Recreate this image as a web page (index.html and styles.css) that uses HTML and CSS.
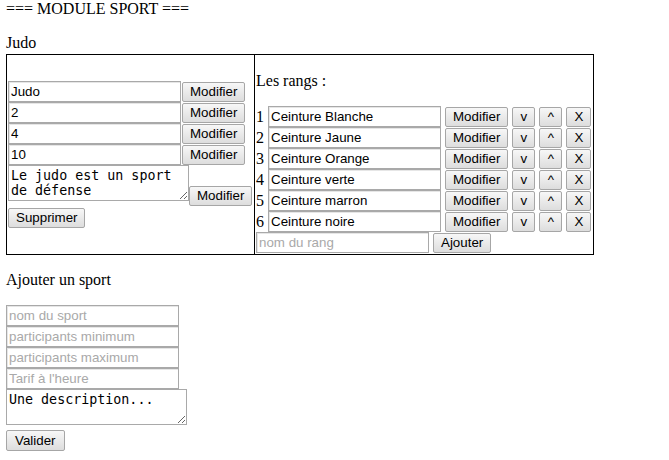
FILE: index.html
```html
<!DOCTYPE html>
<html lang="fr">
<head>
<meta charset="utf-8">
<title>Module sport</title>
<link rel="stylesheet" href="styles.css">
</head>
<body>
<p class="title">=== MODULE SPORT ===</p>
<p class="sport-name">Judo</p>
<div class="sport-table">
  <div class="cell cell-info">
    <div class="field"><input class="inp" type="text" value="Judo"><button class="btn">Modifier</button></div>
    <div class="field"><input class="inp" type="text" value="2"><button class="btn">Modifier</button></div>
    <div class="field"><input class="inp" type="text" value="4"><button class="btn">Modifier</button></div>
    <div class="field"><input class="inp" type="text" value="10"><button class="btn">Modifier</button></div>
    <div class="field field-desc"><textarea class="area">Le judo est un sport de défense</textarea><button class="btn">Modifier</button></div>
    <div class="field"><button class="btn">Supprimer</button></div>
  </div>
  <div class="cell cell-ranks">
    <p class="ranks-title">Les rangs :</p>
    <div class="rank"><span class="num">1</span><input class="inp" type="text" value="Ceinture Blanche"><button class="btn">Modifier</button><button class="btn btn-sm">v</button><button class="btn btn-sm">^</button><button class="btn btn-sm">X</button></div>
    <div class="rank"><span class="num">2</span><input class="inp" type="text" value="Ceinture Jaune"><button class="btn">Modifier</button><button class="btn btn-sm">v</button><button class="btn btn-sm">^</button><button class="btn btn-sm">X</button></div>
    <div class="rank"><span class="num">3</span><input class="inp" type="text" value="Ceinture Orange"><button class="btn">Modifier</button><button class="btn btn-sm">v</button><button class="btn btn-sm">^</button><button class="btn btn-sm">X</button></div>
    <div class="rank"><span class="num">4</span><input class="inp" type="text" value="Ceinture verte"><button class="btn">Modifier</button><button class="btn btn-sm">v</button><button class="btn btn-sm">^</button><button class="btn btn-sm">X</button></div>
    <div class="rank"><span class="num">5</span><input class="inp" type="text" value="Ceinture marron"><button class="btn">Modifier</button><button class="btn btn-sm">v</button><button class="btn btn-sm">^</button><button class="btn btn-sm">X</button></div>
    <div class="rank"><span class="num">6</span><input class="inp" type="text" value="Ceinture noire"><button class="btn">Modifier</button><button class="btn btn-sm">v</button><button class="btn btn-sm">^</button><button class="btn btn-sm">X</button></div>
    <div class="rank rank-add"><input class="inp" type="text" placeholder="nom du rang"><button class="btn">Ajouter</button></div>
  </div>
</div>
<p class="add-title">Ajouter un sport</p>
<form class="add-form">
  <input class="inp" type="text" placeholder="nom du sport">
  <input class="inp" type="text" placeholder="participants minimum">
  <input class="inp" type="text" placeholder="participants maximum">
  <input class="inp" type="text" placeholder="Tarif à l'heure">
  <textarea class="area">Une description...</textarea>
  <div class="submit-row"><button class="btn" type="button">Valider</button></div>
</form>
</body>
</html>
```
FILE: styles.css
```css
html, body {
  background: #ffffff;
}
body {
  margin: 0 6px;
  font-family: "Liberation Serif", "Times New Roman", serif;
  font-size: 16px;
  line-height: 18px;
  color: #000000;
}
p {
  margin: 0;
}
.title {
  margin-bottom: 16px;
}
.sport-name {
  margin-bottom: 2px;
}
.sport-table {
  display: grid;
  grid-template-columns: 248px 338px;
  width: 588px;
  box-sizing: border-box;
  border: 1px solid #000000;
}
.cell {
  padding: 1px;
}
.cell-info {
  border-right: 1px solid #000000;
  display: flex;
  flex-direction: column;
  justify-content: center;
}
.field {
  display: flex;
  align-items: center;
  height: 21px;
  gap: 1px;
}
.field-desc {
  height: 42px;
  align-items: flex-start;
  gap: 0;
}
.field-desc .btn {
  margin-top: 21px;
}
.inp {
  box-sizing: border-box;
  width: 173px;
  height: 21px;
  margin: 0;
  padding: 1px 2px;
  border: 1px solid #a9a9a9;
  box-shadow: inset 1px 1px 0 #e6e6e6;
  font-family: "Liberation Sans", Arial, sans-serif;
  font-size: 13.333px;
  color: #000000;
  background: #ffffff;
  outline: none;
}
.inp::placeholder {
  color: #a9a9a9;
  opacity: 1;
}
.area {
  box-sizing: border-box;
  width: 181px;
  height: 36px;
  margin: 0;
  padding: 2px;
  border: 1px solid #a9a9a9;
  font-family: "DejaVu Sans Mono", "Liberation Mono", monospace;
  font-size: 13.333px;
  line-height: 15px;
  color: #000000;
  background: #ffffff;
  overflow: hidden;
  resize: both;
  outline: none;
}
.btn {
  box-sizing: border-box;
  height: 20px;
  margin: 0;
  padding: 0 7px;
  border: 1px solid #a6a6a6;
  border-radius: 2px;
  background: linear-gradient(#f7f7f7, #dddddd);
  font-family: "Liberation Sans", Arial, sans-serif;
  font-size: 13.333px;
  line-height: 16px;
  color: #000000;
  cursor: pointer;
}
.btn-sm {
  min-width: 23px;
  padding: 0 7px;
}
.ranks-title {
  margin: 16px 0;
}
.rank {
  display: flex;
  align-items: center;
  gap: 4px;
  height: 21px;
}
.num {
  width: 8px;
}
.add-title {
  margin: 16px 0;
}
.add-form {
  display: flex;
  flex-direction: column;
  align-items: flex-start;
}
.submit-row {
  margin-top: 5px;
}
.submit-row .btn {
  height: 21px;
  padding: 0 8px;
}
```
